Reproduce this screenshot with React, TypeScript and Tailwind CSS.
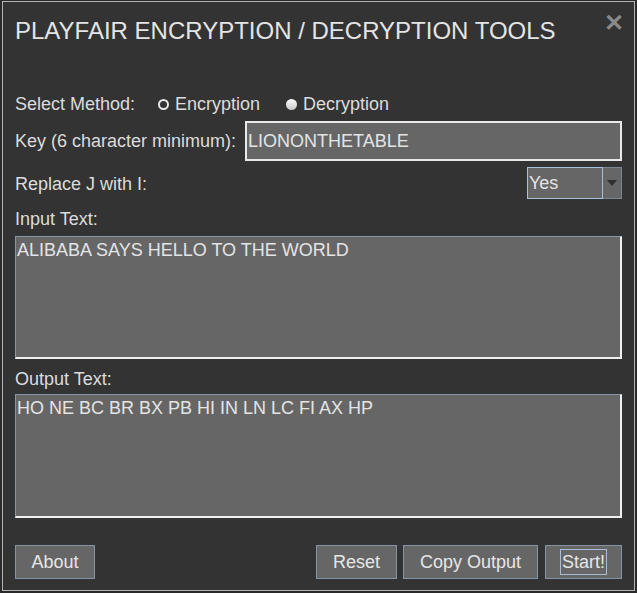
import { useState } from 'react';

const font = { fontFamily: '"Liberation Sans", Arial, sans-serif' };

function Radio({ label, filled }: { label: string; filled?: boolean }) {
  return (
    <label className="flex items-center gap-[6px]">
      {filled ? (
        <span className="w-[11px] h-[11px] rounded-full bg-gradient-to-b from-white to-[#c8c8c8]" />
      ) : (
        <span className="w-[11px] h-[11px] rounded-full border-[2px] border-[#e8e8e8] bg-[#333]" />
      )}
      <span>{label}</span>
    </label>
  );
}

function Button({ children, focused }: { children: React.ReactNode; focused?: boolean }) {
  return (
    <button className="h-[34px] w-full bg-[#666] border border-[#8594a4] text-[#e6e6e6] text-[18px] flex items-center justify-center">
      {focused ? (
        <span className="border border-[#a8bcd4] px-[1px] leading-[24px]">{children}</span>
      ) : (
        children
      )}
    </button>
  );
}

export default function App() {
  const [key, setKey] = useState('LIONONTHETABLE');
  const [input, setInput] = useState('ALIBABA SAYS HELLO TO THE WORLD');

  return (
    <div className="w-[637px] h-[593px] bg-[#2a2a2a] pt-[1px] pl-[2px]" style={font}>
      <div className="w-[633px] h-[590px] bg-[#333333] border border-[#b4b4b4] text-[#dcdcdc] flex flex-col px-[12px]">
        {/* title bar */}
        <div className="flex items-start justify-between h-[62px]">
          <h1 className="mt-[15px] text-[24px] leading-[28px] text-[#e4e4e4]">
            PLAYFAIR ENCRYPTION / DECRYPTION TOOLS
          </h1>
          <span className="mt-[9px] -mr-[2px] text-[#8a8a8a] text-[24px] font-bold leading-[24px]">✕</span>
        </div>

        <div className="mt-[29px] flex items-center h-[22px] text-[18px]">
          <span className="w-[143px]">Select Method:</span>
          <div className="w-[128px]">
            <Radio label="Encryption" />
          </div>
          <Radio label="Decryption" filled />
        </div>

        <div className="mt-[6px] flex items-center text-[18px]">
          <span className="w-[230px]">Key (6 character minimum):</span>
          <input
            value={key}
            onChange={(e) => setKey(e.target.value)}
            className="flex-1 h-[40px] bg-[#666] border-2 border-[#e8e8e8] text-[#e4e4e4] text-[18px] px-[1px] outline-none"
          />
        </div>

        <div className="mt-[6px] flex items-center justify-between text-[18px]">
          <span className="mt-[2px]">Replace J with I:</span>
          <div className="flex h-[32px]">
            <div className="w-[76px] bg-[#666] border border-[#a8c0dc] flex items-center px-[1px] text-[#e4e4e4]">Yes</div>
            <div className="w-[19px] bg-[#666] border border-[#7d8690] border-l-0 flex items-center justify-center">
              <svg width="10" height="6" viewBox="0 0 10 6">
                <path d="M0 0 L10 0 L5 6 Z" fill="#2e2e2e" />
              </svg>
            </div>
          </div>
        </div>

        <div className="mt-[9px] text-[18px] leading-[22px]">Input Text:</div>
        <textarea
          value={input}
          onChange={(e) => setInput(e.target.value)}
          className="mt-[6px] h-[123px] resize-none bg-[#666] border border-[#8996a4] border-b-2 border-r-2 border-b-[#f0f0f0] border-r-[#f0f0f0] text-[#e4e4e4] text-[18px] leading-[20px] px-[1px] pt-[3px] outline-none"
        />

        <div className="mt-[9px] text-[18px] leading-[22px]">Output Text:</div>
        <textarea
          readOnly
          value="HO NE BC BR BX PB HI IN LN LC FI AX HP"
          className="mt-[4px] h-[124px] resize-none bg-[#666] border border-[#8996a4] border-b-2 border-r-2 border-b-[#f0f0f0] border-r-[#f0f0f0] text-[#e4e4e4] text-[18px] leading-[20px] px-[1px] pt-[3px] outline-none"
        />

        <div className="mt-[27px] flex items-center">
          <div className="w-[80px]">
            <Button>About</Button>
          </div>
          <div className="ml-auto flex gap-[6px]">
            <div className="w-[81px]"><Button>Reset</Button></div>
            <div className="w-[135px]"><Button>Copy Output</Button></div>
            <div className="w-[77px] ml-[1px]"><Button focused>Start!</Button></div>
          </div>
        </div>
      </div>
    </div>
  );
}
